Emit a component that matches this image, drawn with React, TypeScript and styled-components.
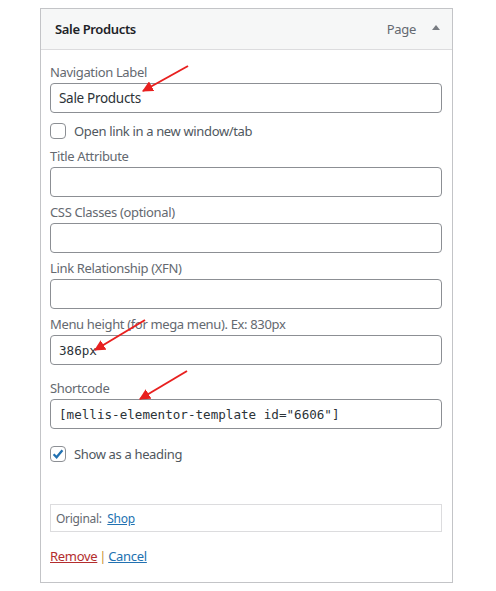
import React from "react";
import styled, { createGlobalStyle } from "styled-components";

const GlobalStyle = createGlobalStyle`
  html, body {
    margin: 0;
    padding: 0;
    background: #ffffff;
  }
  body {
    font-family: "Noto Sans", "Liberation Sans", sans-serif;
    color: #50575e;
  }
`;

const fields = [
  { label: "Title Attribute", value: "" },
  { label: "CSS Classes (optional)", value: "" },
  { label: "Link Relationship (XFN)", value: "" },
];

const App = () => {
  return (
    <Page>
      <GlobalStyle />
      <MenuItem>
        <ItemHeader>
          <ItemTitle>Sale Products</ItemTitle>
          <ItemControls>
            <ItemType>Page</ItemType>
            <Toggle />
          </ItemControls>
        </ItemHeader>
        <Settings>
          <Field>
            <Label>Navigation Label</Label>
            <TextInput defaultValue="Sale Products" />
          </Field>
          <CheckRow>
            <Checkbox />
            <CheckText>Open link in a new window/tab</CheckText>
          </CheckRow>
          {fields.map((f) => (
            <Field key={f.label}>
              <Label>{f.label}</Label>
              <TextInput defaultValue={f.value} />
            </Field>
          ))}
          <Field>
            <Label>Menu height (for mega menu). Ex: 830px</Label>
            <TextInput $mono defaultValue="386px" />
          </Field>
          <Field $extra>
            <Label>Shortcode</Label>
            <TextInput $mono defaultValue={'[mellis-elementor-template id="6606"]'} />
          </Field>
          <CheckRow $top={16}>
            <Checkbox>
              <svg width="14" height="14" viewBox="0 0 14 14">
                <polyline
                  points="2.6,7.2 5.6,10.2 11.4,3.2"
                  fill="none"
                  stroke="#2271b1"
                  strokeWidth="2.3"
                  strokeLinejoin="miter"
                />
              </svg>
            </Checkbox>
            <CheckText>Show as a heading</CheckText>
          </CheckRow>
          <Original>
            Original:&nbsp; <Link href="#">Shop</Link>
          </Original>
          <Actions>
            <Link href="#" $danger>
              Remove
            </Link>
            <Sep>|</Sep>
            <Link href="#">Cancel</Link>
          </Actions>
        </Settings>
      </MenuItem>
      <Arrows width="496" height="591" viewBox="0 0 496 591">
        <defs>
          <marker
            id="head"
            viewBox="0 0 10 10"
            refX="9"
            refY="5"
            markerWidth="11"
            markerHeight="11"
            markerUnits="userSpaceOnUse"
            orient="auto"
          >
            <path d="M0 0 L10 5 L0 10 z" fill="#e8201f" />
          </marker>
        </defs>
        <line x1="188" y1="66" x2="143" y2="91" stroke="#e8201f" strokeWidth="2" markerEnd="url(#head)" />
        <line x1="145" y1="320" x2="95" y2="350" stroke="#e8201f" strokeWidth="2" markerEnd="url(#head)" />
        <line x1="187" y1="371" x2="140" y2="399" stroke="#e8201f" strokeWidth="2" markerEnd="url(#head)" />
      </Arrows>
    </Page>
  );
};

const Page = styled.div`
  position: relative;
  padding: 8px 0 0 40px;
  width: 496px;
  height: 591px;
  box-sizing: border-box;
`;

const MenuItem = styled.div`
  width: 413px;
  box-sizing: border-box;
  border: 1px solid #c3c4c7;
  background: #ffffff;
`;

const ItemHeader = styled.div`
  display: flex;
  align-items: center;
  justify-content: space-between;
  height: 40px;
  padding: 0 12px 0 14px;
  background: #f6f7f7;
  border-bottom: 1px solid #dcdcde;
`;

const ItemTitle = styled.span`
  font-size: 13px;
  font-weight: 600;
  letter-spacing: -0.35px;
  color: #1d2327;
`;

const ItemControls = styled.div`
  display: flex;
  align-items: center;
  gap: 16px;
`;

const ItemType = styled.span`
  font-size: 13px;
  letter-spacing: -0.3px;
  color: #646970;
`;

const Toggle = styled.span`
  width: 0;
  height: 0;
  border-left: 4.5px solid transparent;
  border-right: 4.5px solid transparent;
  border-bottom: 5px solid #787c82;
  margin-top: -3px;
`;

const Settings = styled.div`
  padding: 13px 10px 17px 9px;
`;

const Field = styled.div<{ $extra?: boolean }>`
  display: flex;
  flex-direction: column;
  margin-top: ${(p) => (p.$extra ? "14px" : "6px")};
  &:first-child {
    margin-top: 0;
  }
`;

const Label = styled.label`
  font-size: 13px;
  line-height: 18px;
  letter-spacing: -0.35px;
  color: #646970;
  margin-bottom: 2px;
`;

const TextInput = styled.input<{ $mono?: boolean }>`
  height: 30px;
  box-sizing: border-box;
  width: 100%;
  border: 1px solid #8c8f94;
  border-radius: 4px;
  padding: 0 8px;
  font-family: ${(p) =>
    p.$mono ? '"DejaVu Sans Mono", "Liberation Mono", monospace' : '"Noto Sans", "Liberation Sans", sans-serif'};
  font-size: ${(p) => (p.$mono ? "12.6px" : "13.5px")};
  letter-spacing: ${(p) => (p.$mono ? "0" : "-0.3px")};
  color: #2c3338;
  background: #ffffff;
  outline: none;
`;

const CheckRow = styled.div<{ $top?: number }>`
  display: flex;
  align-items: center;
  gap: 8px;
  margin: ${(p) => p.$top ?? 9}px 0 7px;
`;

const Checkbox = styled.span`
  display: flex;
  align-items: center;
  justify-content: center;
  width: 16px;
  height: 16px;
  box-sizing: border-box;
  border: 1px solid #8c8f94;
  border-radius: 4px;
  background: #ffffff;
`;

const CheckText = styled.span`
  font-size: 13px;
  letter-spacing: -0.35px;
  color: #50575e;
`;

const Original = styled.div`
  margin-top: 41px;
  height: 28px;
  box-sizing: border-box;
  border: 1px solid #dcdcde;
  padding: 0 5px;
  display: flex;
  align-items: center;
  font-size: 12px;
  letter-spacing: -0.3px;
  color: #646970;
  white-space: pre;
`;

const Link = styled.a<{ $danger?: boolean }>`
  color: ${(p) => (p.$danger ? "#b32d2e" : "#2271b1")};
  text-decoration: underline;
`;

const Actions = styled.div`
  margin-top: 15px;
  font-size: 13px;
  letter-spacing: -0.3px;
  display: flex;
  align-items: center;
`;

const Sep = styled.span`
  color: #c98f32;
  margin: 0 2px;
`;

const Arrows = styled.svg`
  position: absolute;
  left: 0;
  top: 0;
  pointer-events: none;
`;

export default App;
